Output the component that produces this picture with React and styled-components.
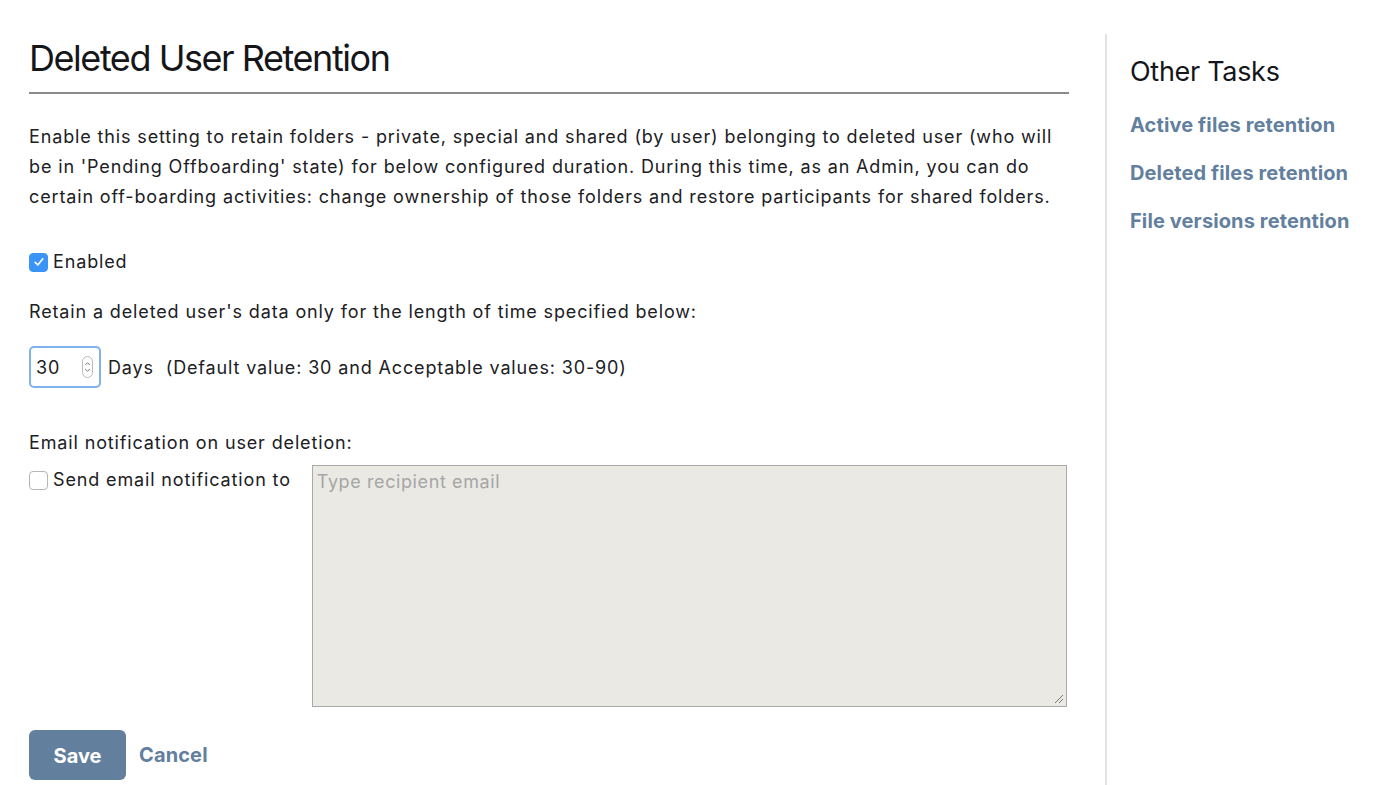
import React from "react";
import styled, { createGlobalStyle } from "styled-components";

const Global = createGlobalStyle`
  html, body { margin: 0; padding: 0; background: #fff; }
  body { font-family: Inter, "Noto Sans", "Liberation Sans", sans-serif; color: #1d1d1f; }
  * { box-sizing: border-box; }
`;

const Page = styled.div`
  display: flex;
  align-items: stretch;
  min-height: 785px;
  padding-left: 29px;
`;

const Main = styled.main`
  width: 1040px;
  padding-top: 36px;
`;

const Title = styled.h1`
  margin: 0;
  font-size: 36px;
  font-weight: 400;
  letter-spacing: -1.45px;
  line-height: 44px;
  color: #15151a;
  padding-bottom: 12px;
  border-bottom: 2px solid #8a8a8a;
`;

const Para = styled.p`
  margin: ${(p) => p.$m || "0"};
  font-size: 18px;
  line-height: 30px;
  letter-spacing: 0.86px;
  color: #202024;
`;

const CheckRow = styled.label`
  display: flex;
  align-items: center;
  gap: 5px;
  font-size: 18px;
  line-height: 30px;
  letter-spacing: 0.86px;
  color: #202024;
  margin: ${(p) => p.$m || "0"};
`;

const Box = styled.span`
  width: 19px;
  height: 19px;
  border-radius: 4px;
  display: inline-flex;
  align-items: center;
  justify-content: center;
  background: ${(p) => (p.$checked ? "#3a93f7" : "#fff")};
  border: 1px solid ${(p) => (p.$checked ? "#3a93f7" : "#b5b5b5")};
  flex: none;
`;

const DaysRow = styled.div`
  display: flex;
  align-items: center;
  gap: 7px;
  margin-top: 19px;
  font-size: 18px;
  letter-spacing: 0.86px;
  color: #202024;
`;

const NumberBox = styled.div`
  width: 72px;
  height: 42px;
  border: 2px solid #7fb2ea;
  border-radius: 5px;
  display: flex;
  align-items: center;
  justify-content: space-between;
  padding: 0 6px 0 5px;
  font-size: 18px;
`;

const Spinner = styled.span`
  width: 11px;
  height: 22px;
  border: 1px solid #bbb;
  border-radius: 6px;
  display: flex;
  align-items: center;
  justify-content: center;
`;

const EmailRow = styled.div`
  display: flex;
  align-items: flex-start;
  gap: 21px;
  margin-top: 7px;
`;

const TextArea = styled.div`
  position: relative;
  width: 755px;
  height: 242px;
  background: #eae9e3;
  border: 1px solid #a9a9a9;
  padding: 4px 4px;
  font-size: 18px;
  letter-spacing: 0.6px;
  color: #a6a6a6;
  line-height: 24px;
`;

const Grip = styled.svg`
  position: absolute;
  right: 2px;
  bottom: 2px;
`;

const Actions = styled.div`
  display: flex;
  align-items: center;
  gap: 13px;
  margin-top: 23px;
`;

const SaveButton = styled.button`
  width: 97px;
  height: 50px;
  border: none;
  border-radius: 6px;
  background: #637f9e;
  color: #fff;
  font-family: inherit;
  font-size: 20px;
  font-weight: 700;
  padding-top: 3px;
`;

const LinkText = styled.a`
  color: #637f9e;
  font-size: 20px;
  font-weight: 700;
  letter-spacing: 0.12px;
  text-decoration: none;
  display: block;
`;

const Sidebar = styled.aside`
  margin-left: 36px;
  margin-top: 34px;
  border-left: 2px solid #e2e2e2;
  padding-left: 23px;
  flex: 1;
`;

const SideTitle = styled.h2`
  margin: 22px 0 0;
  font-size: 27px;
  font-weight: 400;
  letter-spacing: -0.3px;
  line-height: 32px;
  color: #15151a;
`;

const SideList = styled.nav`
  display: flex;
  flex-direction: column;
  gap: 24px;
  margin-top: 25px;
`;

export default function App() {
  return (
    <>
      <Global />
      <Page>
        <Main>
          <Title>Deleted User Retention</Title>
          <Para $m="28px 0 0">
            Enable this setting to retain folders - private, special and shared (by user) belonging to deleted user (who will be in 'Pending Offboarding' state) for below configured duration. During this time, as an Admin, you can do certain off-boarding activities: change ownership of those folders and restore participants for shared folders.
          </Para>
          <CheckRow $m="35px 0 0">
            <Box $checked>
              <svg width="12" height="12" viewBox="0 0 12 12">
                <path d="M2.2 6.4 L4.8 9 L9.8 2.8" fill="none" stroke="#fff" strokeWidth="1.7" strokeLinecap="round" strokeLinejoin="round" />
              </svg>
            </Box>
            Enabled
          </CheckRow>
          <Para $m="20px 0 0">Retain a deleted user's data only for the length of time specified below:</Para>
          <DaysRow>
            <NumberBox>
              <span>30</span>
              <Spinner>
                <svg width="7" height="14" viewBox="0 0 7 14">
                  <path d="M1.2 5 L3.5 2.7 L5.8 5 M1.2 9 L3.5 11.3 L5.8 9" fill="none" stroke="#777" strokeWidth="1" />
                </svg>
              </Spinner>
            </NumberBox>
            <span>Days&nbsp; (Default value: 30 and Acceptable values: 30-90)</span>
          </DaysRow>
          <Para $m="40px 0 0">Email notification on user deletion:</Para>
          <EmailRow>
            <CheckRow>
              <Box />
              Send email notification to
            </CheckRow>
            <TextArea>
              Type recipient email
              <Grip width="12" height="12" viewBox="0 0 12 12">
                <path d="M11 3 L3 11 M11 7 L7 11" stroke="#777" strokeWidth="1" />
              </Grip>
            </TextArea>
          </EmailRow>
          <Actions>
            <SaveButton>Save</SaveButton>
            <LinkText href="#">Cancel</LinkText>
          </Actions>
        </Main>
        <Sidebar>
          <SideTitle>Other Tasks</SideTitle>
          <SideList>
            <LinkText href="#">Active files retention</LinkText>
            <LinkText href="#">Deleted files retention</LinkText>
            <LinkText href="#">File versions retention</LinkText>
          </SideList>
        </Sidebar>
      </Page>
    </>
  );
}
